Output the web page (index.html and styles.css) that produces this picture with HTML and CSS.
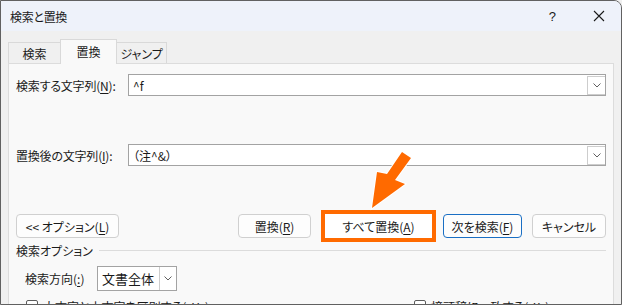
FILE: index.html
```html
<!DOCTYPE html>
<html lang="ja">
<head>
    <meta charset="UTF-8">
    <title>検索と置換</title>
    <link rel="stylesheet" href="styles.css">
</head>
<body>
    <div class="window">
        <div class="titlebar">
            <span class="title">検索と置換</span>
            <span class="help">?</span>
            <svg class="close" viewBox="0 0 12 12" width="12" height="12">
                <path d="M1 1L11 11M11 1L1 11" stroke="#1a1a1a" stroke-width="1.1" fill="none" />
            </svg>
        </div>
        <div class="body">
            <div class="tabs">
                <div class="tab tab-first">検索</div>
                <div class="tab tab-active">置換</div>
                <div class="tab tab-last">ジャンプ</div>
            </div>
            <div class="panel">
                <div class="field">
                    <span class="label">検索する文字列(<u>N</u>):</span>
                    <div class="combo">
                        <span class="combo-value">^f</span>
                        <span class="drop">
                            <svg viewBox="0 0 8 5" width="8" height="5"><path d="M0.5 0.5L4 4L7.5 0.5" stroke="#606060" fill="none" /></svg>
                        </span>
                    </div>
                </div>
                <div class="field field-gap">
                    <span class="label">置換後の文字列(<u>I</u>):</span>
                    <div class="combo">
                        <span class="combo-value">（注^&amp;）</span>
                        <span class="drop">
                            <svg viewBox="0 0 8 5" width="8" height="5"><path d="M0.5 0.5L4 4L7.5 0.5" stroke="#606060" fill="none" /></svg>
                        </span>
                    </div>
                </div>
                <div class="buttons">
                    <button class="btn btn-options">&lt;&lt; オプション(<u>L</u>)</button>
                    <button class="btn btn-replace">置換(<u>R</u>)</button>
                    <div class="highlight">
                        <button class="btn btn-all">すべて置換(<u>A</u>)</button>
                    </div>
                    <button class="btn btn-next">次を検索(<u>F</u>)</button>
                    <button class="btn btn-cancel">キャンセル</button>
                </div>
                <div class="group-title">
                    <span>検索オプション</span>
                    <span class="rule"></span>
                </div>
                <div class="direction">
                    <span class="direction-label">検索方向(<u>:</u>)</span>
                    <div class="select">
                        <span class="select-value">文書全体</span>
                        <span class="select-drop">
                            <svg viewBox="0 0 8 5" width="8" height="5"><path d="M0.5 0.5L4 4L7.5 0.5" stroke="#606060" fill="none" /></svg>
                        </span>
                    </div>
                </div>
                <div class="checks">
                    <label class="check check-left"><span class="box"></span>大文字と小文字を区別する(<u>H</u>)</label>
                    <label class="check"><span class="box"></span>接頭辞に一致する(<u>X</u>)</label>
                </div>
            </div>
        </div>
        <svg class="arrow" width="622" height="305" viewBox="0 0 622 305">
            <polygon points="402,152 411,158 395,180 405,184 372,208 377,172 387,174"
                     fill="#ff6a00" stroke="#ffffff" stroke-width="2" stroke-linejoin="miter" paint-order="stroke" />
        </svg>
    </div>
</body>
</html>
```

FILE: styles.css
```css
body {
    margin: 0;
    background-color: #f0f0f0;
    font-family: "Noto Sans CJK JP", "Noto Sans", sans-serif;
    font-size: 12px;
    font-feature-settings: "palt";
    color: #1a1a1a;
}

u {
    text-decoration-thickness: 1px;
    text-underline-offset: 2px;
}

.window {
    position: relative;
    width: 622px;
    height: 305px;
    box-sizing: border-box;
    border: 1px solid #616161;
    border-top-right-radius: 8px;
    background-color: #f0f0f0;
    overflow: hidden;
}

.titlebar {
    height: 30px;
    display: flex;
    align-items: center;
    background-color: #eef2fa;
    padding-left: 9px;
    padding-right: 16px;
}

.title {
    font-size: 12px;
    letter-spacing: -0.3px;
}

.help {
    margin-left: auto;
    margin-right: 37px;
    font-family: "Liberation Sans", sans-serif;
    font-size: 13px;
}

.close {
    display: block;
}

.body {
    padding: 8px 7px 0 7px;
}

/* tabs */

.tabs {
    display: flex;
    align-items: flex-end;
    height: 24px;
}

.tab {
    box-sizing: border-box;
    height: 21px;
    display: flex;
    align-items: center;
    justify-content: center;
    border: 1px solid #d9d9d9;
    border-bottom: none;
    background-color: #f0f0f0;
    padding-top: 1px;
}

.tab-first {
    width: 53px;
}

.tab-active {
    position: relative;
    z-index: 1;
    width: 57px;
    height: 25px;
    margin-left: -1px;
    margin-bottom: -1px;
    background-color: #f9f9f9;
    padding-top: 0;
    padding-bottom: 2px;
}

.tab-last {
    width: 51px;
    margin-left: -1px;
}

.panel {
    height: 260px;
    border: 1px solid #dcdcdc;
    background-color: #f9f9f9;
    padding: 10px 7px 0 7px;
}

/* text fields */

.field {
    display: flex;
    align-items: center;
    height: 22px;
}

.field-gap {
    margin-top: 48px;
}

.label {
    width: 112px;
    flex-shrink: 0;
    letter-spacing: -0.2px;
}

.combo {
    flex: 1;
    height: 22px;
    box-sizing: border-box;
    display: flex;
    align-items: center;
    border: 1px solid #a3a3a3;
    background-color: #fff;
}

.combo-value {
    flex: 1;
    padding-left: 4px;
}

.drop {
    box-sizing: border-box;
    width: 18px;
    height: 19px;
    margin-top: 1px;
    display: flex;
    align-items: center;
    justify-content: center;
    border: 1px solid #cdcdcd;
    border-right: none;
    background-color: #fff;
}

/* buttons */

.buttons {
    display: flex;
    align-items: center;
    height: 24px;
    margin-top: 48px;
}

.btn {
    box-sizing: border-box;
    height: 24px;
    padding: 0;
    font-family: inherit;
    font-size: 12px;
    font-feature-settings: "palt";
    color: #1a1a1a;
    background-color: #fdfdfd;
    border: 1px solid #d0d0d0;
    border-radius: 4px;
}

.btn-options {
    width: 103px;
}

.btn-replace {
    width: 73px;
    margin-left: auto;
}

.highlight {
    margin: -4px -3px -4px 10px;
    border: 4px solid #ff6a00;
    display: flex;
}

.btn-all {
    width: 107px;
    border-radius: 0;
    border-color: #ffffff;
    background-color: #fff;
}

.btn-next {
    width: 79px;
    margin-left: 10px;
    border-color: #1a6fc4;
}

.btn-cancel {
    width: 74px;
    margin-left: 10px;
}

/* options */

.group-title {
    display: flex;
    align-items: center;
    height: 16px;
    margin-top: 4px;
}

.rule {
    flex: 1;
    height: 1px;
    margin-left: 6px;
    background-color: #dcdcdc;
}

.direction {
    display: flex;
    align-items: center;
    height: 25px;
    margin-top: 8px;
    padding-left: 9px;
}

.direction-label {
    width: 72px;
}

.select {
    box-sizing: border-box;
    width: 80px;
    height: 25px;
    display: flex;
    align-items: stretch;
    border: 1px solid #a3a3a3;
    background-color: #fff;
}

.select-value {
    flex: 1;
    display: flex;
    align-items: center;
    padding-left: 4px;
    font-size: 13px;
}

.select-drop {
    width: 16px;
    display: flex;
    align-items: center;
    justify-content: center;
    border-left: 1px solid #cdcdcd;
}

.checks {
    display: flex;
    margin-top: 9px;
    padding-left: 10px;
}

.check {
    display: flex;
    align-items: flex-start;
    gap: 5px;
    line-height: 14px;
}

.check-left {
    width: 388px;
    flex-shrink: 0;
}

.box {
    width: 12px;
    height: 12px;
    box-sizing: border-box;
    border: 1px solid #5c5c5c;
    border-radius: 2px;
    background-color: #fff;
}

.arrow {
    position: absolute;
    left: -1px;
    top: -1px;
    pointer-events: none;
}
```
